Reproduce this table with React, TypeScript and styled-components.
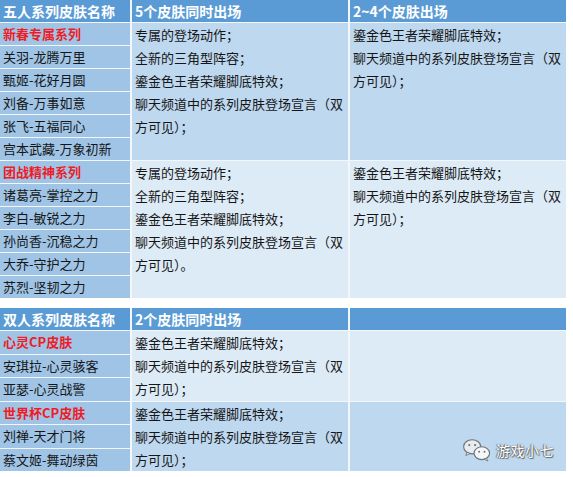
import React from 'react';
import styled, { createGlobalStyle } from 'styled-components';

const GlobalStyle = createGlobalStyle`
  html, body {
    margin: 0;
    padding: 0;
    background: #fff;
  }
  body {
    font-family: "Noto Sans CJK SC", "Noto Sans", sans-serif;
    color: #1b1b1b;
  }
`;

type Tone = 'mid' | 'light';

interface Group {
  title: string;
  skins: string[];
  mid: string[];
  right: string[];
  tone: Tone;
}

interface TableData {
  headers: string[];
  groups: Group[];
  rowHeight: number;
}

const effect = '鎏金色王者荣耀脚底特效；';
const chat = '聊天频道中的系列皮肤登场宣言（双方可见）；';

const fiveTable: TableData = {
  headers: ['五人系列皮肤名称', '5个皮肤同时出场', '2~4个皮肤出场'],
  rowHeight: 22,
  groups: [
    {
      title: '新春专属系列',
      skins: ['关羽-龙腾万里', '甄姬-花好月圆', '刘备-万事如意', '张飞-五福同心', '宫本武藏-万象初新'],
      mid: ['专属的登场动作；', '全新的三角型阵容；', effect, chat],
      right: [effect, chat],
      tone: 'mid',
    },
    {
      title: '团战精神系列',
      skins: ['诸葛亮-掌控之力', '李白-敏锐之力', '孙尚香-沉稳之力', '大乔-守护之力', '苏烈-坚韧之力'],
      mid: ['专属的登场动作；', '全新的三角型阵容；', effect, '聊天频道中的系列皮肤登场宣言（双方可见）。'],
      right: [effect, chat],
      tone: 'light',
    },
  ],
};

const pairTable: TableData = {
  headers: ['双人系列皮肤名称', '2个皮肤同时出场', ''],
  rowHeight: 22.5,
  groups: [
    {
      title: '心灵CP皮肤',
      skins: ['安琪拉-心灵骇客', '亚瑟-心灵战警'],
      mid: [effect, chat],
      right: [],
      tone: 'light',
    },
    {
      title: '世界杯CP皮肤',
      skins: ['刘禅-天才门将', '蔡文姬-舞动绿茵'],
      mid: [effect, chat],
      right: [],
      tone: 'mid',
    },
  ],
};

const WeChatIcon = () => (
  <svg width="30" height="24" viewBox="0 0 28 22">
    <ellipse cx="9.5" cy="8" rx="8" ry="6.6" fill="#e9ecef" stroke="#6d7378" strokeWidth="1" />
    <path d="M4.5 13 L3.6 16.2 L7.6 14.2 Z" fill="#e9ecef" stroke="#6d7378" strokeWidth="0.8" />
    <circle cx="6.8" cy="6.4" r="1" fill="#6d7378" />
    <circle cx="12.2" cy="6.4" r="1" fill="#6d7378" />
    <ellipse cx="18.5" cy="14" rx="7.2" ry="6" fill="#f4f6f7" stroke="#6d7378" strokeWidth="1" />
    <path d="M22.5 18.6 L24.2 21.2 L20.4 19.6 Z" fill="#f4f6f7" stroke="#6d7378" strokeWidth="0.8" />
    <circle cx="16" cy="12.6" r="0.9" fill="#6d7378" />
    <circle cx="21" cy="12.6" r="0.9" fill="#6d7378" />
  </svg>
);

const SkinTable: React.FC<{ data: TableData }> = ({ data }) => (
  <Grid $rowHeight={data.rowHeight}>
    {data.headers.map((h, i) => (
      <HeadCell key={`h${i}`} $col={i + 1}>{h}</HeadCell>
    ))}
    {data.groups.map((g) => {
      const span = g.skins.length + 1;
      return (
        <React.Fragment key={g.title}>
          <NameCell>
            <SeriesTitle>{g.title}</SeriesTitle>
          </NameCell>
          <PerkCell $col={2} $span={span} $tone={g.tone}>
            {g.mid.map((line) => (
              <PerkLine key={line}>{line}</PerkLine>
            ))}
          </PerkCell>
          <PerkCell $col={3} $span={span} $tone={g.tone}>
            {g.right.map((line) => (
              <PerkLine key={line}>{line}</PerkLine>
            ))}
          </PerkCell>
          {g.skins.map((s) => (
            <NameCell key={s}>{s}</NameCell>
          ))}
        </React.Fragment>
      );
    })}
  </Grid>
);

export default function App() {
  return (
    <>
      <GlobalStyle />
      <Page>
        <SkinTable data={fiveTable} />
        <SkinTable data={pairTable} />
        <Watermark>
          <WeChatIcon />
          <WatermarkText>游戏小七</WatermarkText>
        </Watermark>
      </Page>
    </>
  );
}

// --- styles ---
const Page = styled.div`
  position: relative;
  width: 573px;
  height: 477px;
  display: flex;
  flex-direction: column;
  gap: 10px;
  overflow: hidden;
`;

const Grid = styled.div<{ $rowHeight: number }>`
  display: grid;
  width: 566px;
  grid-template-columns: 130px 216px 216px;
  grid-auto-rows: ${(p) => p.$rowHeight}px;
  grid-template-rows: 22px;
  column-gap: 2px;
  row-gap: 1px;
  background: #f3f7fb;
`;

const HeadCell = styled.div<{ $col: number }>`
  grid-column: ${(p) => p.$col};
  background: #5b9bd5;
  color: #fff;
  font-size: 14px;
  font-weight: 700;
  line-height: 22px;
  padding: 0 3px;
  white-space: nowrap;
  overflow: hidden;
`;

const NameCell = styled.div`
  grid-column: 1;
  background: #9fc4e6;
  font-size: 13px;
  line-height: 22px;
  padding: 0 3px;
  white-space: nowrap;
  color: #161616;
`;

const SeriesTitle = styled.span`
  color: #ee1c25;
  font-weight: 700;
`;

const PerkCell = styled.div<{ $col: number; $span: number; $tone: Tone }>`
  grid-column: ${(p) => p.$col};
  grid-row: span ${(p) => p.$span};
  background: ${(p) => (p.$tone === 'mid' ? '#bed8ef' : '#ddebf7')};
  font-size: 13px;
  line-height: 23px;
  padding: 0 3px;
  color: #161616;
`;

const PerkLine = styled.div``;

const Watermark = styled.div`
  position: absolute;
  right: 19px;
  bottom: 15px;
  display: flex;
  align-items: center;
  gap: 4px;
`;

const WatermarkText = styled.span`
  font-size: 14px;
  color: #fff;
  letter-spacing: 0.5px;
  text-shadow: 0 0 1px #555, 1px 1px 1px #666, -1px 0 1px #777;
`;
